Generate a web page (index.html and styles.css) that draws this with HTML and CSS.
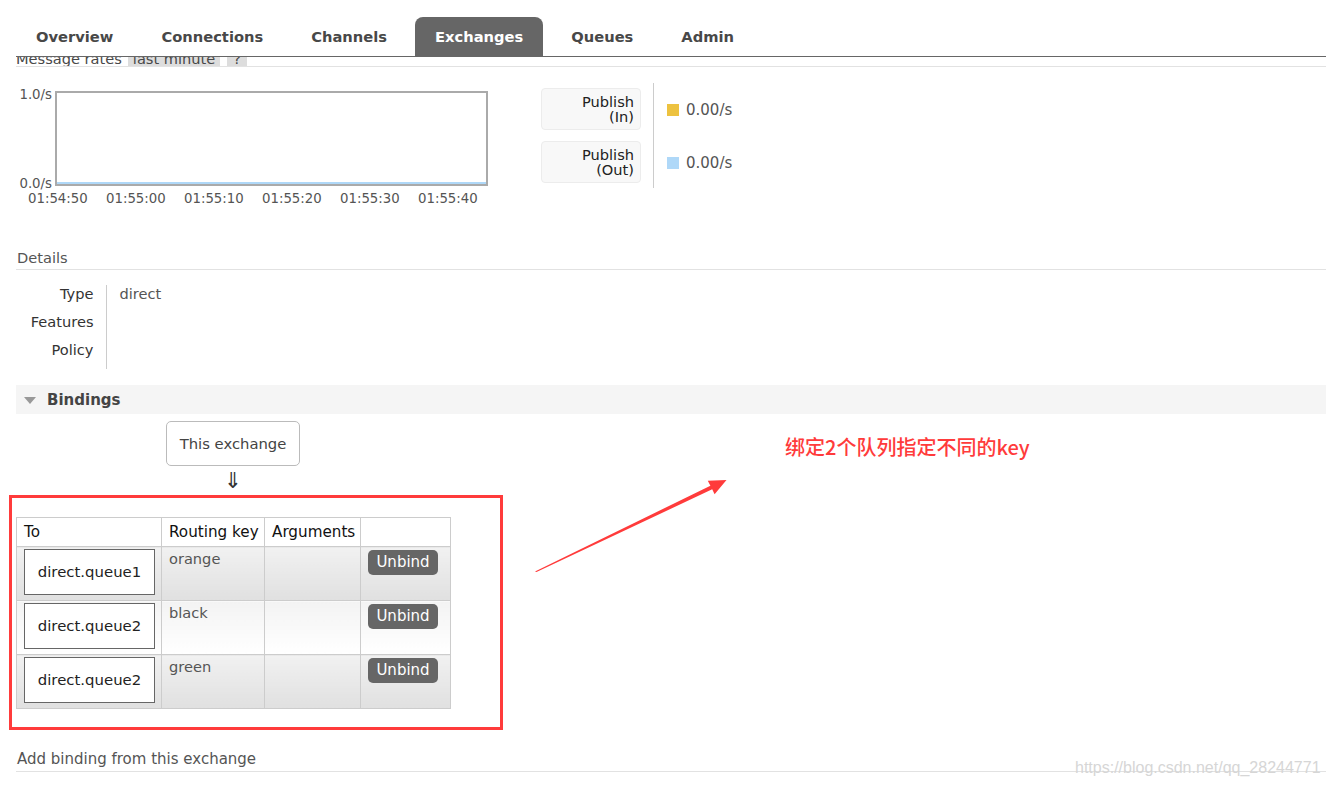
FILE: index.html
```html
<!DOCTYPE html>
<html lang="en">
<head>
<meta charset="utf-8">
<title>Exchange: direct</title>
<link rel="stylesheet" href="styles.css">
</head>
<body>
<div class="page">
  <nav class="tabs">
    <a class="tab">Overview</a>
    <a class="tab">Connections</a>
    <a class="tab">Channels</a>
    <a class="tab active">Exchanges</a>
    <a class="tab">Queues</a>
    <a class="tab">Admin</a>
  </nav>

  <main class="content">
    <div class="clip-heading">
      <div class="heading-line">
        <span class="heading-text">Message rates</span>
        <span class="chip">last minute</span>
        <span class="chip help">?</span>
      </div>
    </div>

    <section class="rates">
      <div class="chart">
        <div class="chart-row">
          <div class="yaxis"><span>1.0/s</span><span>0.0/s</span></div>
          <div class="plot"><div class="series"></div></div>
        </div>
        <div class="xaxis">
          <span>01:54:50</span><span>01:55:00</span><span>01:55:10</span><span>01:55:20</span><span>01:55:30</span><span>01:55:40</span>
        </div>
      </div>
      <div class="legend">
        <div class="legend-labels">
          <div class="legend-box">Publish<br>(In)</div>
          <div class="legend-box">Publish<br>(Out)</div>
        </div>
        <div class="legend-divider"></div>
        <div class="legend-values">
          <div class="legend-value"><i class="swatch swatch-in"></i>0.00/s</div>
          <div class="legend-value"><i class="swatch swatch-out"></i>0.00/s</div>
        </div>
      </div>
    </section>

    <h2 class="section-title details-title">Details</h2>
    <table class="facts">
      <tr><th>Type</th><td>direct</td></tr>
      <tr><th>Features</th><td></td></tr>
      <tr><th>Policy</th><td></td></tr>
    </table>

    <div class="band"><span class="tri"></span>Bindings</div>

    <div class="this-exchange">
      <div class="exchange-box">This exchange</div>
      <div class="down">&#8659;</div>
    </div>

    <div class="annot-box">
      <table class="bindings">
        <colgroup><col class="c1"><col class="c2"><col class="c3"><col class="c4"></colgroup>
        <thead>
          <tr><th>To</th><th>Routing key</th><th>Arguments</th><th></th></tr>
        </thead>
        <tbody>
          <tr class="alt1">
            <td><div class="queue">direct.queue1</div></td>
            <td class="rk">orange</td>
            <td></td>
            <td class="act"><span class="btn">Unbind</span></td>
          </tr>
          <tr class="alt2">
            <td><div class="queue">direct.queue2</div></td>
            <td class="rk">black</td>
            <td></td>
            <td class="act"><span class="btn">Unbind</span></td>
          </tr>
          <tr class="alt1">
            <td><div class="queue">direct.queue2</div></td>
            <td class="rk">green</td>
            <td></td>
            <td class="act"><span class="btn">Unbind</span></td>
          </tr>
        </tbody>
      </table>
    </div>

    <h2 class="section-title add-title">Add binding from this exchange</h2>
  </main>

  <div class="note">绑定2个队列指定不同的key</div>
  <svg class="arrow" width="1326" height="786" viewBox="0 0 1326 786">
    <polygon points="535,571.5 710.4,485.7 707.8,480.8 726.5,480 714.6,494.2 712.2,489.3 536.5,572" fill="#ff3b3b"/>
  </svg>
  <div class="watermark">https://blog.csdn.net/qq_28244771</div>
</div>
</body>
</html>
```

FILE: styles.css
```css
* { box-sizing: border-box; }

html, body {
  margin: 0;
  padding: 0;
  background: #fff;
}

body {
  font-family: "DejaVu Sans", Verdana, sans-serif;
  font-size: 14.6px;
  color: #484848;
}

.page {
  position: relative;
  width: 1326px;
  height: 786px;
  overflow: hidden;
}

/* ---------- tabs ---------- */
.tabs {
  display: flex;
  gap: 8px;
  margin-left: 16px;
  padding-top: 17px;
  border-bottom: 1px solid #666;
}

.tab {
  display: block;
  height: 39px;
  line-height: 38px;
  padding: 1px 20px 0 20px;
  font-weight: bold;
  font-size: 14.7px;
  color: #484848;
  border-radius: 8px 8px 0 0;
}

.tab.active {
  background: #666;
  color: #fff;
}

/* ---------- content ---------- */
.content {
  padding-left: 16px;
}

.clip-heading {
  height: 10px;
  overflow: hidden;
  display: flex;
  align-items: flex-end;
  border-bottom: 1px solid #e2e2e2;
}

.heading-line {
  display: flex;
  align-items: flex-end;
  line-height: 17px;
  flex: none;
  margin-bottom: -1px;
}

.heading-text {
  color: #484848;
}

.chip {
  background: #ddd;
  padding: 0 5px;
  margin-left: 6px;
  color: #484848;
}

.chip.help {
  margin-left: 7px;
  padding: 0 6px;
}

/* ---------- rates chart ---------- */
.rates {
  display: flex;
  align-items: flex-start;
  padding-top: 16px;
}

.chart {
  margin-top: 4px;
  width: 472px;
}

.chart-row {
  display: flex;
  align-items: flex-start;
}

.yaxis {
  width: 36px;
  height: 104px;
  display: flex;
  flex-direction: column;
  justify-content: space-between;
  align-items: flex-end;
  font-size: 13.3px;
  line-height: 15px;
  color: #545454;
}

.plot {
  margin-top: 4px;
  margin-left: 3px;
  width: 433px;
  height: 95px;
  border: 2px solid #aaa;
  display: flex;
  align-items: flex-end;
}

.series {
  width: 100%;
  height: 2px;
  background: #afd8f8;
}

.xaxis {
  display: flex;
  padding-left: 12px;
  font-size: 13.3px;
  line-height: 15px;
  color: #545454;
}

.xaxis span {
  width: 78px;
  flex: none;
}

.legend {
  display: flex;
  margin-left: 53px;
}

.legend-labels {
  margin-top: 5px;
  display: flex;
  flex-direction: column;
  gap: 11px;
}

.legend-box {
  width: 100px;
  height: 42px;
  background: #f8f8f8;
  border: 1px solid #ececec;
  border-radius: 4px;
  text-align: right;
  padding: 5px 6px 0 0;
  line-height: 15px;
  color: #222;
}

.legend-divider {
  margin-left: 12px;
  width: 1px;
  height: 105px;
  background: #ccc;
}

.legend-values {
  margin-top: 5px;
  padding-left: 13px;
  display: flex;
  flex-direction: column;
  gap: 11px;
}

.legend-value {
  height: 42px;
  display: flex;
  align-items: center;
  color: #545454;
  font-size: 15px;
  padding-top: 2px;
}

.swatch {
  display: block;
  width: 12px;
  height: 12px;
  margin-right: 7px;
}

.swatch-in { background: #edc240; }
.swatch-out { background: #afd8f8; }

/* ---------- section titles ---------- */
.section-title {
  margin: 0;
  font-size: 14.6px;
  font-weight: normal;
  line-height: 17px;
  color: #555;
  padding: 0 0 3px 1px;
  border-bottom: 1px solid #e2e2e2;
}

.details-title { margin-top: 43px; }
.add-title { margin-top: 21px; font-size: 15px; }

/* ---------- details table ---------- */
.facts {
  margin-top: 15px;
  border-collapse: collapse;
}

.facts th {
  width: 90px;
  text-align: right;
  font-weight: normal;
  vertical-align: top;
  padding: 0 12px 11px 0;
  line-height: 17px;
  border-right: 1px solid #ccc;
  color: #333;
}

.facts td {
  vertical-align: top;
  padding: 0 0 11px 13px;
  line-height: 17px;
  color: #555;
}

/* ---------- bindings ---------- */
.band {
  margin-top: 16px;
  height: 29px;
  display: flex;
  align-items: center;
  padding-left: 8px;
  padding-top: 1px;
  background: #f5f5f5;
  font-weight: bold;
  font-size: 15px;
  color: #444;
}

.tri {
  width: 0;
  height: 0;
  border-left: 6.5px solid transparent;
  border-right: 6.5px solid transparent;
  border-top: 7px solid #999;
  margin-right: 11px;
}

.this-exchange {
  margin-top: 7px;
  margin-left: 150px;
  width: 134px;
  display: flex;
  flex-direction: column;
  align-items: center;
}

.exchange-box {
  width: 134px;
  height: 45px;
  border: 1px solid #bbb;
  border-radius: 5px;
  display: flex;
  align-items: center;
  justify-content: center;
  color: #444;
  font-size: 14.8px;
}

.down {
  height: 29px;
  line-height: 29px;
  font-size: 22px;
  color: #333;
}

.annot-box {
  margin-left: -7px;
  width: 494px;
  height: 235px;
  border: 3px solid #ff3b3b;
  padding: 19px 0 0 4px;
}

.bindings {
  border-collapse: collapse;
  table-layout: fixed;
  width: 434px;
  border: 1px solid #ccc;
}

.bindings .c1 { width: 145px; }
.bindings .c2 { width: 103px; }
.bindings .c3 { width: 96px; }
.bindings .c4 { width: 90px; }

.bindings th {
  height: 29px;
  text-align: left;
  font-weight: normal;
  font-size: 15.2px;
  color: #111;
  padding: 0 6px 0 7px;
  border: 1px solid #ccc;
  background: #fff;
  white-space: nowrap;
}

.bindings td {
  height: 54px;
  vertical-align: top;
  padding: 2px 7px 0 7px;
  border: 1px solid #ccc;
  line-height: 17px;
}

.bindings tr.alt1 td {
  background: linear-gradient(#f1f1f1, #e0e0e0);
}

.bindings tr.alt2 td {
  background: linear-gradient(#f3f3f3, #ffffff);
}

.queue {
  width: 131px;
  height: 46px;
  border: 1px solid #666;
  background: #fff;
  display: flex;
  align-items: center;
  justify-content: center;
  color: #222;
  font-size: 14.9px;
}

.bindings td.rk {
  padding-top: 3px;
  color: #555;
}

.bindings td.act {
  padding-top: 3px;
}

.btn {
  display: block;
  width: 70px;
  height: 25px;
  line-height: 25px;
  text-align: center;
  background: #666;
  color: #fff;
  border-radius: 5px;
  font-size: 15px;
}

/* ---------- annotations ---------- */
.note {
  position: absolute;
  left: 785px;
  top: 434px;
  font-family: "Noto Sans CJK SC", "Liberation Sans", sans-serif;
  font-size: 20px;
  font-weight: 500;
  line-height: 26px;
  color: #ff3b3b;
  white-space: nowrap;
}

.arrow {
  position: absolute;
  left: 0;
  top: 0;
  pointer-events: none;
}

.watermark {
  position: absolute;
  left: 1075px;
  top: 758px;
  font-family: "Liberation Sans", Arial, sans-serif;
  font-size: 16px;
  line-height: 20px;
  color: #d6d6d6;
  white-space: nowrap;
}
```
